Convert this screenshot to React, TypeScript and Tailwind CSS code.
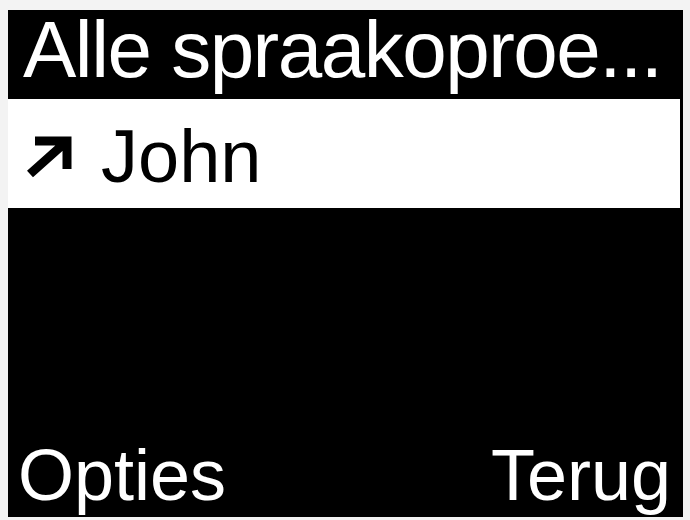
const ArrowOut = () => (
  <svg width="50" height="46" viewBox="0 0 50 46" className="shrink-0">
    <path d="M11 6 H43 V34 M43 6 L6 39" fill="none" stroke="#000" strokeWidth="9" strokeLinejoin="miter" />
  </svg>
);

const App = () => {
  return (
    <div
      className="w-[690px] h-[520px] bg-[#f3f3f3] pl-[8px] pr-[7px] pt-[10px] pb-[3px]"
      style={{ fontFamily: '"Liberation Sans", Arial, sans-serif' }}
    >
      <div className="w-full h-full bg-black flex flex-col">
        <div className="h-[89px] pl-[15px] text-white text-[80px] leading-none tracking-[-1.5px] whitespace-nowrap">
          Alle spraakoproe...
        </div>
        <div className="h-[109px] mr-[3px] bg-white flex items-start pt-[21px]">
          <div className="ml-[16px] mt-[15px] w-[77px]">
            <ArrowOut />
          </div>
          <span className="text-black text-[74px] leading-none">John</span>
        </div>
        <div className="mt-auto flex justify-between pl-[10px] pr-[12px] pb-[6px] text-white text-[72px] leading-none">
          <span>Opties</span>
          <span>Terug</span>
        </div>
      </div>
    </div>
  );
};

export default App;
